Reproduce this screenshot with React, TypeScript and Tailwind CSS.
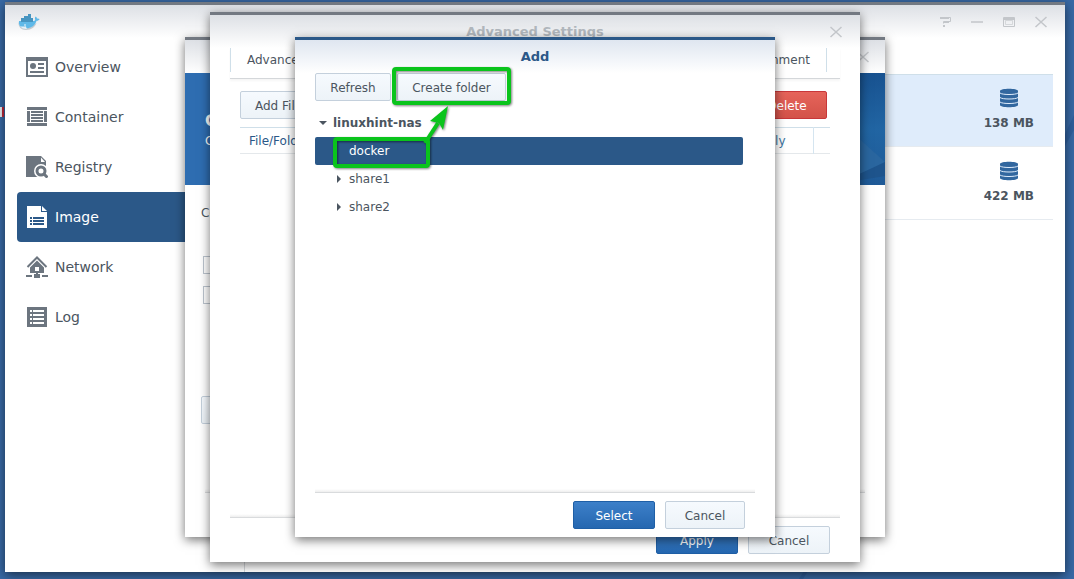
import type { ReactNode } from 'react';

const navItems = [
  { name: 'Overview', icon: <OverviewIcon /> },
  { name: 'Container', icon: <ContainerIcon /> },
  { name: 'Registry', icon: <RegistryIcon /> },
  { name: 'Image', icon: <ImageIcon />, active: true },
  { name: 'Network', icon: <NetworkIcon /> },
  { name: 'Log', icon: <LogIcon /> },
];

const images = [
  { size: '138 MB', selected: true },
  { size: '422 MB', selected: false },
];

const folders = [
  { name: 'docker', selected: true },
  { name: 'share1', selected: false },
  { name: 'share2', selected: false },
];

function OverviewIcon() {
  return (
    <svg width="22" height="22" viewBox="0 0 22 22">
      <path fill="currentColor" fillRule="evenodd" d="M0 1h22v20H0zM2 5v14h18V5z" />
      <circle cx="7" cy="10" r="3" fill="currentColor" />
      <path fill="currentColor" d="M12 7h6v2h-6zM12 11h6v2h-6zM4 15h14v2H4z" />
    </svg>
  );
}

function ContainerIcon() {
  return (
    <svg width="22" height="22" viewBox="0 0 22 22">
      <path fill="currentColor" d="M1 1h20v3H1zM1 17h20v3H1zM1 5h3v11H1zM18 5h3v11h-3z" />
      <path fill="currentColor" d="M5 5h12v2H5zM5 8h12v2H5zM5 11h12v2H5zM5 14h12v2H5z" />
    </svg>
  );
}

function RegistryIcon() {
  return (
    <svg width="22" height="22" viewBox="0 0 22 22">
      <path fill="currentColor" d="M0 0h15l5 5v16H0z" />
      <path fill="#fff" d="M15 1.500l4 4.500h-4z" />
      <circle cx="15" cy="15" r="7" fill="#fff" />
      <path stroke="#fff" strokeWidth="5" d="M16 16l6 6" />
      <circle cx="15" cy="15" r="4" fill="none" stroke="currentColor" strokeWidth="3" />
      <path stroke="currentColor" strokeWidth="3" d="M18 18l3.500 3.500" />
    </svg>
  );
}

function ImageIcon() {
  return (
    <svg width="22" height="22" viewBox="0 0 22 22">
      <path fill="currentColor" d="M1 0h14v6h6v16H1zM16 0l5 5h-5z" />
      <path fill="#2b5888" d="M4 11h2v2H4zM7 11h11v2H7zM4 14h2v2H4zM7 14h11v2H7zM4 17h2v2H4zM7 17h11v2H7z" />
    </svg>
  );
}

function NetworkIcon() {
  return (
    <svg width="22" height="22" viewBox="0 0 22 22">
      <path fill="none" stroke="currentColor" strokeWidth="2" d="M1.500 11L11 1.500l9.500 9.500" />
      <path fill="currentColor" fillRule="evenodd" d="M11 4.500l7 7V17H4v-5.500zM9 11v4h4v-4z" />
      <path fill="currentColor" d="M10 17h2v2h-2zM0 19h6v2H0zM8 18h6v4H8zM16 19h6v2h-6z" />
    </svg>
  );
}

function LogIcon() {
  return (
    <svg width="22" height="22" viewBox="0 0 22 22">
      <path fill="currentColor" d="M1 1h20v20H1z" />
      <path fill="#fff" d="M4 4h2v2H4zM7 4h11v2H7zM4 8h2v2H4zM7 8h11v2H7zM4 12h2v2H4zM7 12h11v2H7zM4 16h2v2H4zM7 16h11v2H7z" />
    </svg>
  );
}

function WhaleLogo() {
  return (
    <svg width="22" height="18" viewBox="0 0 22 18">
      <path fill="#c4cbd0" d="M.3 9c0 5 3 8 7.700 8 5.500 0 9-3 10.500-7l-2 1c-3 4-10 6-15 1z" />
      <path
        fill="#5fb9e8"
        d="M1 8h14.500c1.500 0 2-.8 1.500-2.200-.3-1 .1-1.800.8-2.400.8.700 1.200 1.400 1.200 2.200 1-.3 1.900-.1 2.600.4-.5 1.200-1.500 1.800-3 1.800C17.200 12 13.500 15.500 8 15.500 3.200 15.500.3 13 1 8z"
      />
      <path fill="#4795c1" d="M3 5h3v4H3zM6 3h4v6H6zM10 1h3v8h-3zM13 5h2v4h-2z" />
      <path fill="#e5eff5" d="M2 13c2 .8 4 .5 6 .2 0 1.200.6 2 1.600 2.600C6 16.200 3.500 15.500 2 13z" />
      <circle cx="7" cy="12" r=".8" fill="#fff" />
    </svg>
  );
}

function CloseButton() {
  return (
    <button type="button" aria-label="Close" className="text-[#c3c6ca]">
      <svg width="12" height="12" viewBox="0 0 12 12" fill="none" stroke="currentColor" strokeWidth="1.500">
        <path d="M.5 1l11 10M11.500 1l-11 10" />
      </svg>
    </button>
  );
}

function DatabaseIcon() {
  return (
    <svg width="20" height="20" viewBox="0 0 20 20">
      <path fill="#32679f" d="M1 3c0-3 18-3 18 0v14c0 3-18 3-18 0z" />
      <path fill="none" stroke="#dfecfb" d="M1 5c2 2 16 2 18 0M1 9.500c2 2 16 2 18 0M1 14c2 2 16 2 18 0" />
    </svg>
  );
}

const buttonStyles = {
  plain: 'border-[#c4d0dc] bg-linear-to-b from-[#f6fafe] to-[#edf3f8] text-[#4b5560]',
  primary: 'border-[#1f5fa6] bg-linear-to-b from-[#3d80c9] to-[#2567b0] text-white',
  danger: 'border-[#c8373a] bg-linear-to-b from-[#e6645a] to-[#d35249] text-white',
};

function Button({ kind = 'plain', className = '', children }: { kind?: keyof typeof buttonStyles; className?: string; children: ReactNode }) {
  return (
    <button type="button" className={`h-7 shrink-0 rounded-xs border pt-px text-center whitespace-nowrap ${buttonStyles[kind]} ${className}`}>
      {children}
    </button>
  );
}

function Footer({ children }: { children?: ReactNode }) {
  return (
    <footer className="mx-5 mt-auto shrink-0">
      <div className="h-1 border-b border-[#d9dbdd] bg-linear-to-b from-white to-[#eeeeee]" />
      <div className="flex h-11 justify-end gap-2.5 px-2.5 pt-2">{children}</div>
    </footer>
  );
}

const windowShadow = 'shadow-[0_3px_10px_rgba(0,0,0,0.55)]';

function GeneralWindow() {
  return (
    <section className={`absolute flex h-[500px] w-[700px] flex-col border-t-3 border-[#737982] bg-white ${windowShadow}`}>
      <header className="flex h-[33px] shrink-0 items-center justify-end bg-linear-to-b from-[#dde0e5] to-white px-4">
        <CloseButton />
      </header>
      <div className="relative h-28 shrink-0 overflow-hidden bg-[#2e6db1] px-5 pt-9 text-white">
        <svg className="absolute right-0 top-0" width="30" height="112" viewBox="0 0 30 112">
          <defs>
            <linearGradient id="banner" x1="0" y1="0" x2="0" y2="1">
              <stop offset="0" stopColor="#185290" />
              <stop offset=".5" stopColor="#2165a3" />
              <stop offset="1" stopColor="#1f5a97" />
            </linearGradient>
          </defs>
          <path fill="url(#banner)" d="M0 0h30v112H0z" />
          <path fill="#2a669f" d="M0 62l30 27L5 103H0z" />
          <path fill="#1e548c" d="M30 89v14L0 108v-5z" />
        </svg>
        <p className="text-base leading-6 font-bold">General Settings</p>
        <p className="leading-4">Configure the container</p>
      </div>
      <div className="flex flex-col items-start px-4 pt-5">
        <p className="leading-4">Container Name:</p>
        <div className="mt-[35px] flex flex-col gap-3 pl-0.5">
          <input type="checkbox" aria-label="Enable resource limitation" className="size-[18px] appearance-none border border-[#bcc4ce]" />
          <input type="checkbox" aria-label="Enable auto-restart" className="size-[18px] appearance-none border border-[#bcc4ce]" />
        </div>
        <Button className="mt-[92px] px-4">Advanced Settings</Button>
      </div>
      <Footer />
    </section>
  );
}

function AdvancedWindow() {
  return (
    <section className={`absolute flex h-[550px] w-[650px] flex-col border-t-3 border-[#737982] bg-white ${windowShadow}`}>
      <header className="grid h-[33px] shrink-0 grid-cols-[1fr_auto_1fr] items-center bg-linear-to-b from-[#dde0e5] to-white px-[18px]">
        <h2 className="col-start-2 text-[13px] font-bold text-[#b1b7bd]">Advanced Settings</h2>
        <div className="flex justify-end">
          <CloseButton />
        </div>
      </header>
      <nav className="mx-5 h-[31px] shrink-0 border-b border-[#d4d7da] pr-[13px] shadow-[0_2px_2px_rgba(0,0,0,0.04)]">
        <div className="flex h-6 items-center justify-between border-x border-[#cfdfe9] px-4">
          <button type="button">Advanced Settings</button>
          <button type="button">Environment</button>
        </div>
      </nav>
      <div className="px-[30px] pt-3">
        <div className="flex justify-between pr-[3px]">
          <Button className="px-3.5">Add File</Button>
          <Button kind="danger" className="w-20">Delete</Button>
        </div>
        <table className="mt-2 w-full border-y border-t-[#cfdfe9] border-b-[#e4e8eb] text-[#2b5888]">
          <thead>
            <tr className="h-[26px]">
              <th className="px-[9px] text-left font-normal">File/Folder</th>
              <th className="border-r border-[#d5e5f0] pr-[27px] text-right font-normal text-[#3b74a0]">Read-Only</th>
              <th className="w-[17px]" />
            </tr>
          </thead>
        </table>
      </div>
      <Footer>
        <Button kind="primary" className="w-[82px]">Apply</Button>
        <Button className="w-[82px]">Cancel</Button>
      </Footer>
    </section>
  );
}

function AddWindow() {
  return (
    <section className={`absolute flex h-[500px] w-[480px] flex-col border-t-3 border-[#2b5888] bg-white ${windowShadow}`}>
      <header className="flex h-[33px] shrink-0 items-center justify-center bg-linear-to-b from-[#dfe6f0] to-white">
        <h2 className="text-[13px] font-bold text-[#2b5888]">Add</h2>
      </header>
      <div className="flex gap-1.5 px-5">
        <Button className="w-[76px]">Refresh</Button>
        <Button className="w-[109px]">Create folder</Button>
      </div>
      <div className="mt-2 mr-8 ml-5">
        <div className="flex h-7 items-center gap-1.5 pl-1 font-bold">
          <svg width="8" height="4" viewBox="0 0 8 4">
            <path fill="#4b5560" d="M0 0h8L4 4z" />
          </svg>
          linuxhint-nas
        </div>
        <ul>
          {folders.map((folder) => (
            <li
              key={folder.name}
              className={`flex h-7 items-center gap-2 rounded-xs pl-[22px] ${folder.selected ? 'bg-[#2b5888] text-white' : ''}`}
            >
              <svg width="4" height="8" viewBox="0 0 4 8">
                {!folder.selected && <path fill="#4b5560" d="M0 0l4 4-4 4z" />}
              </svg>
              {folder.name}
            </li>
          ))}
        </ul>
      </div>
      <Footer>
        <Button kind="primary" className="w-[82px]">Select</Button>
        <Button className="w-20">Cancel</Button>
      </Footer>

      {/* highlight marks over the folder and the button */}
      <svg
        className="pointer-events-none absolute top-[25px] left-[35px] drop-shadow-[1px_1px_1px_rgba(0,0,0,0.5)]"
        width="190"
        height="110"
        viewBox="0 0 190 110"
      >
        <g fill="none" stroke="#0ac41c" strokeWidth="4">
          <rect x="64" y="4" width="115" height="34" rx="2" />
          <rect x="5" y="74" width="93" height="27" rx="2" />
          <path d="M95 78l13-20" />
        </g>
        <path fill="#0ac41c" d="M118 41l-5 24-4-7-9-2z" />
      </svg>
    </section>
  );
}

export default function App() {
  return (
    <div className="relative h-screen overflow-hidden bg-[#3869a5] font-['DejaVu_Sans',Verdana,sans-serif] text-xs text-[#4b5560]">
      <svg className="absolute inset-0 h-full w-full" viewBox="0 0 1074 579" preserveAspectRatio="none">
        <path fill="#2f5f9c" d="M1074 115l-14 30v10l14-25zM808 571h-4l-5 8h4z" />
        <path fill="#e9eef3" d="M0 107h4v10H0z" />
        <path fill="#c0283a" d="M2 107h2v10H2z" />
      </svg>
      <main className={`absolute top-0.5 right-[9px] bottom-[7px] left-[5px] flex flex-col border-t-3 border-[#737982] bg-white ${windowShadow}`}>
        <header className="flex h-[33px] shrink-0 items-center justify-between bg-linear-to-b from-[#dde0e5] to-white pr-[18px] pl-[13px]">
          <WhaleLogo />
          <div className="flex gap-5 text-[#c3c6ca]">
            <button type="button" aria-label="Help">
              <svg width="12" height="12" viewBox="0 0 12 12" fill="none" stroke="currentColor">
                <path d="M1 1.500h10.500v4H4.500v2M1 2.500h9M4 6.500h6M4 9.500h2M4 10.500h2" />
              </svg>
            </button>
            <button type="button" aria-label="Minimize">
              <svg width="12" height="12" viewBox="0 0 12 12" stroke="currentColor" strokeWidth="1.500">
                <path d="M0 6h12" />
              </svg>
            </button>
            <button type="button" aria-label="Maximize">
              <svg width="12" height="12" viewBox="0 0 12 12" fill="none" stroke="currentColor">
                <path d="M.5 1.500h11v9H.5zM0 2.500h12M0 3.500h12" />
                <path strokeOpacity=".6" d="M2.500 4.500h7v4h-7z" />
              </svg>
            </button>
            <CloseButton />
          </div>
        </header>
        <div className="flex min-h-0 grow">
          <nav className="w-60 shrink-0 border-r border-[#d6d9dc] pt-1 pl-3 text-sm">
            {navItems.map((item) => (
              <a
                key={item.name}
                href="#"
                className={`flex h-[50px] items-center gap-[7px] rounded-sm pl-[9px] ${item.active ? 'bg-[#2b5888] text-white' : 'text-[#4b5560]'}`}
              >
                <span className={item.active ? 'text-white' : 'text-[#6c757f]'}>{item.icon}</span>
                {item.name}
              </a>
            ))}
          </nav>
          <ul className="grow pt-9 pr-3">
            {images.map((image) => (
              <li
                key={image.size}
                className={`flex h-[73px] flex-col items-end border-b border-[#e6ebf0] pt-3.5 pr-[19px] font-bold ${image.selected ? 'bg-[#dfecfb] shadow-[inset_0_1px_#cfdfe9]' : ''}`}
              >
                <div className="flex flex-col items-center gap-[7px]">
                  <DatabaseIcon />
                  {image.size}
                </div>
              </li>
            ))}
          </ul>
        </div>
        <div className="absolute inset-0 -top-[3px] flex items-center justify-center">
          <GeneralWindow />
          <AdvancedWindow />
          <AddWindow />
        </div>
      </main>
    </div>
  );
}
